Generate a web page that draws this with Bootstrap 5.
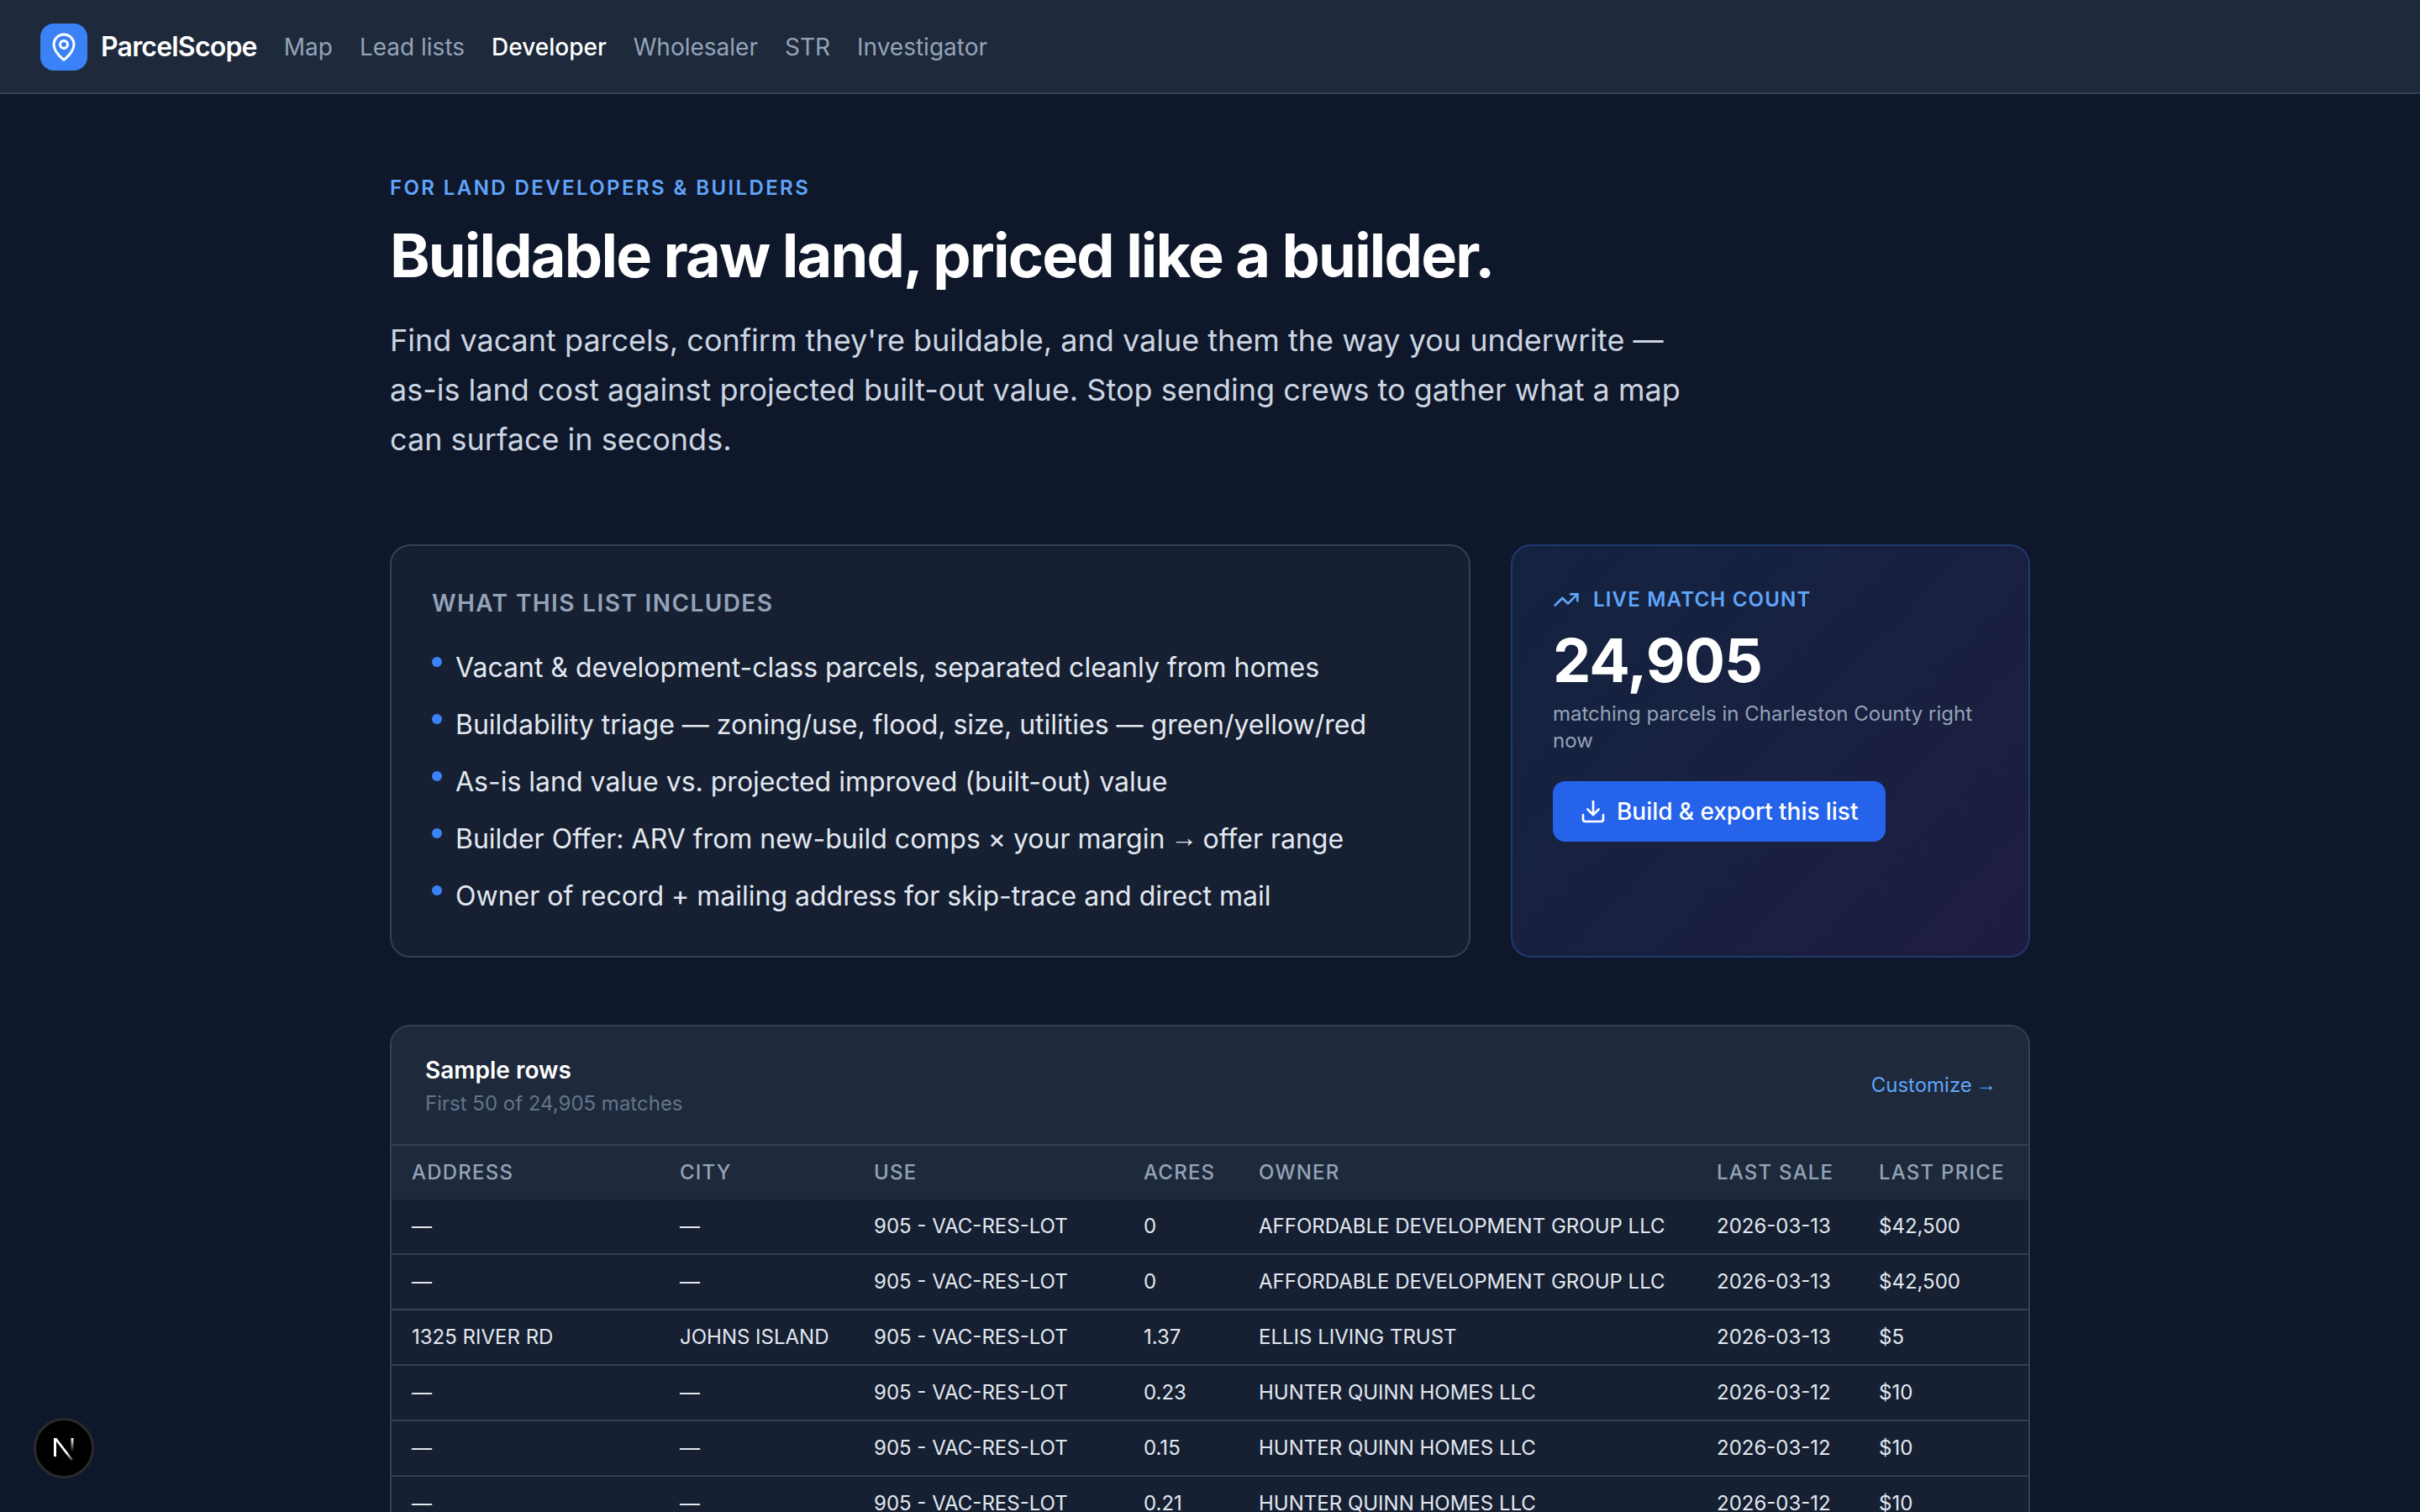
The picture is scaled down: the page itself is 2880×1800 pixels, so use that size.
<!DOCTYPE html>
<html lang="en">
<head>
    <meta charset="UTF-8">
    <meta name="viewport" content="width=device-width, initial-scale=1.0">
    <title>ParcelScope - Developer</title>
    <link href="https://cdn.jsdelivr.net/npm/bootstrap@5.3.0/dist/css/bootstrap.min.css" rel="stylesheet">
    <style>
        body {
            background-color: #0f172a;
            font-family: Inter, "Noto Sans", sans-serif;
            color: #e2e8f0;
            height: 1800px;
            overflow: hidden;
        }
        .top-bar {
            background-color: #1e293b;
            border-bottom: 2px solid #334155;
            height: 112px;
            padding: 2px 48px 0;
            gap: 32px;
        }
        .logo-box {
            width: 56px;
            height: 56px;
            border-radius: 16px;
            background-color: #3b82f6;
        }
        .logo-name {
            font-size: 32px;
            font-weight: 600;
            letter-spacing: -0.8px;
            color: #fff;
            margin-left: -16px;
        }
        .top-bar .nav { gap: 32px; }
        .top-bar .nav-link {
            padding: 0;
            font-size: 28px;
            color: #94a3b8;
        }
        .top-bar .nav-link.active {
            color: #fff;
            font-weight: 500;
        }
        .page-main {
            width: 2048px;
            margin: 0 auto;
            padding: 96px 48px 0;
        }
        .eyebrow {
            font-size: 24px;
            line-height: 32px;
            font-weight: 600;
            letter-spacing: 2.4px;
            color: #60a5fa;
        }
        .hero-title {
            font-size: 72px;
            line-height: 80px;
            font-weight: 700;
            letter-spacing: -1.8px;
            color: #fff;
            margin: 24px 0 32px;
        }
        .hero-text {
            font-size: 36px;
            line-height: 59px;
            color: #cbd5e1;
            max-width: 1568px;
            margin: 0;
        }
        .two-up {
            display: grid;
            grid-template-columns: 1fr 618px;
            gap: 48px;
            margin-top: 95px;
        }
        .info-card {
            background-color: #162032;
            border: 2px solid #334155;
            border-radius: 24px;
            padding: 48px;
            height: 492px;
        }
        .info-head {
            font-size: 28px;
            line-height: 40px;
            font-weight: 600;
            letter-spacing: 1.4px;
            color: #94a3b8;
            margin-bottom: 33px;
        }
        .inc-list { gap: 20px; }
        .inc-list li {
            font-size: 32px;
            line-height: 48px;
            color: #e2e8f0;
        }
        .inc-dot {
            width: 12px;
            height: 12px;
            margin-top: 11px;
            border-radius: 50%;
            background-color: #3b82f6;
            flex: none;
        }
        .small-arrow {
            font-family: "Liberation Sans", sans-serif;
            line-height: 0;
            margin-left: -0.07em;
            letter-spacing: -0.08em;
            vertical-align: 0.06em;
        }
        .count-card {
            background: linear-gradient(135deg, #132340, #1e1d40);
            border: 2px solid #1e3a6e;
            border-radius: 24px;
            padding: 48px;
            height: 492px;
        }
        .count-label {
            font-size: 24px;
            line-height: 32px;
            font-weight: 600;
            letter-spacing: 1.2px;
            color: #60a5fa;
        }
        .count-num {
            font-size: 72px;
            line-height: 80px;
            font-weight: 700;
            letter-spacing: -1px;
            color: #fff;
            margin-top: 16px;
        }
        .count-sub {
            font-size: 24px;
            line-height: 32px;
            color: #94a3b8;
            margin: 8px 0 32px;
        }
        .btn-export {
            --bs-btn-bg: #2563eb;
            --bs-btn-border-color: #2563eb;
            --bs-btn-hover-bg: #2563eb;
            --bs-btn-hover-border-color: #2563eb;
            height: 72px;
            padding: 0 32px 0 31px;
            gap: 12px;
            font-size: 28px;
            font-weight: 500;
            letter-spacing: -0.05px;
            border-radius: 14px;
        }
        .rows-card {
            margin-top: 80px;
            background-color: #162032;
            border: 2px solid #334155;
            border-radius: 24px;
            overflow: hidden;
        }
        .rows-head {
            background-color: #1e293b;
            border-bottom: 2px solid #334155;
            height: 142px;
            padding: 0 40px;
        }
        .rows-title {
            font-size: 28px;
            line-height: 40px;
            font-weight: 600;
            color: #fff;
        }
        .rows-sub {
            font-size: 24px;
            line-height: 32px;
            margin-top: 4px;
            color: #64748b;
        }
        .rows-link {
            font-size: 24px;
            color: #60a5fa;
            text-decoration: none;
        }
        .parcel-table {
            --bs-table-bg: transparent;
            --bs-table-color: #e2e8f0;
            --bs-table-border-color: #334155;
            table-layout: fixed;
            margin: 0;
        }
        .parcel-table th {
            background-color: #1e293b;
            color: #94a3b8;
            font-size: 24px;
            line-height: 32px;
            font-weight: 500;
            letter-spacing: 1.2px;
            padding: 16px 24px;
            border-bottom: 0;
            white-space: nowrap;
        }
        .parcel-table td {
            font-size: 24px;
            line-height: 32px;
            padding: 16px 24px;
            border-bottom-width: 2px;
            white-space: nowrap;
        }
        .c-addr { width: 319px; }
        .c-city { width: 231px; }
        .c-use { width: 321px; }
        .c-acres { width: 137px; }
        .c-owner { width: 545px; }
        .c-sale { width: 193px; }
        .c-price { width: 202px; }
        .next-badge {
            position: fixed;
            left: 40px;
            bottom: 40px;
            width: 72px;
            height: 72px;
            border-radius: 50%;
            background-color: #000;
            border: 3px solid #2b2b2b;
        }
    </style>
</head>
<body>
    <nav class="navbar top-bar d-flex justify-content-start flex-nowrap">
        <span class="logo-box d-flex align-items-center justify-content-center">
            <svg width="36" height="36" viewBox="0 0 24 24" fill="none" stroke="#fff" stroke-width="2" stroke-linecap="round" stroke-linejoin="round"><path d="M20 10c0 4.993-5.539 10.193-7.399 11.799a1 1 0 0 1-1.202 0C9.539 20.193 4 14.993 4 10a8 8 0 0 1 16 0"/><circle cx="12" cy="10" r="3"/></svg>
        </span>
        <span class="logo-name">ParcelScope</span>
        <ul class="nav">
            <li class="nav-item"><a class="nav-link" href="#">Map</a></li>
            <li class="nav-item"><a class="nav-link" href="#">Lead lists</a></li>
            <li class="nav-item"><a class="nav-link active" href="#">Developer</a></li>
            <li class="nav-item"><a class="nav-link" href="#">Wholesaler</a></li>
            <li class="nav-item"><a class="nav-link" href="#">STR</a></li>
            <li class="nav-item"><a class="nav-link" href="#">Investigator</a></li>
        </ul>
    </nav>

    <main class="page-main">
        <div class="eyebrow">FOR LAND DEVELOPERS &amp; BUILDERS</div>
        <h1 class="hero-title">Buildable raw land, priced like a builder.</h1>
        <p class="hero-text">Find vacant parcels, confirm they're buildable, and value them the way you underwrite — as-is land cost against projected built-out value. Stop sending crews to gather what a map can surface in seconds.</p>

        <div class="two-up">
            <div class="info-card">
                <div class="info-head">WHAT THIS LIST INCLUDES</div>
                <ul class="inc-list list-unstyled d-flex flex-column m-0">
                    <li class="d-flex gap-3"><span class="inc-dot"></span><span>Vacant &amp; development-class parcels, separated cleanly from homes</span></li>
                    <li class="d-flex gap-3"><span class="inc-dot"></span><span>Buildability triage — zoning/use, flood, size, utilities — green/yellow/red</span></li>
                    <li class="d-flex gap-3"><span class="inc-dot"></span><span>As-is land value vs. projected improved (built-out) value</span></li>
                    <li class="d-flex gap-3"><span class="inc-dot"></span><span>Builder Offer: ARV from new-build comps × your margin <span class="small-arrow">→</span> offer range</span></li>
                    <li class="d-flex gap-3"><span class="inc-dot"></span><span>Owner of record + mailing address for skip-trace and direct mail</span></li>
                </ul>
            </div>
            <div class="count-card">
                <div class="count-label d-flex align-items-center gap-3">
                    <svg width="32" height="32" viewBox="0 0 24 24" fill="none" stroke="#60a5fa" stroke-width="2" stroke-linecap="round" stroke-linejoin="round"><polyline points="22 7 13.5 15.5 8.5 10.5 2 17"/><polyline points="16 7 22 7 22 13"/></svg>
                    LIVE MATCH COUNT
                </div>
                <div class="count-num">24,905</div>
                <p class="count-sub">matching parcels in Charleston County right now</p>
                <button type="button" class="btn btn-primary btn-export d-inline-flex align-items-center">
                    <svg width="32" height="32" viewBox="0 0 24 24" fill="none" stroke="#fff" stroke-width="2" stroke-linecap="round" stroke-linejoin="round"><path d="M21 15v4a2 2 0 0 1-2 2H5a2 2 0 0 1-2-2v-4"/><polyline points="7 10 12 15 17 10"/><line x1="12" y1="15" x2="12" y2="3"/></svg>
                    Build &amp; export this list
                </button>
            </div>
        </div>

        <div class="rows-card">
            <div class="rows-head d-flex align-items-center justify-content-between">
                <div>
                    <div class="rows-title">Sample rows</div>
                    <div class="rows-sub">First 50 of 24,905 matches</div>
                </div>
                <a class="rows-link" href="#">Customize <span class="small-arrow">→</span></a>
            </div>
            <table class="table parcel-table">
                <colgroup>
                    <col class="c-addr"><col class="c-city"><col class="c-use"><col class="c-acres"><col class="c-owner"><col class="c-sale"><col class="c-price">
                </colgroup>
                <thead>
                    <tr><th>ADDRESS</th><th>CITY</th><th>USE</th><th>ACRES</th><th>OWNER</th><th>LAST SALE</th><th>LAST PRICE</th></tr>
                </thead>
                <tbody>
                    <tr><td>—</td><td>—</td><td>905 - VAC-RES-LOT</td><td>0</td><td>AFFORDABLE DEVELOPMENT GROUP LLC</td><td>2026-03-13</td><td>$42,500</td></tr>
                    <tr><td>—</td><td>—</td><td>905 - VAC-RES-LOT</td><td>0</td><td>AFFORDABLE DEVELOPMENT GROUP LLC</td><td>2026-03-13</td><td>$42,500</td></tr>
                    <tr><td>1325 RIVER RD</td><td>JOHNS ISLAND</td><td>905 - VAC-RES-LOT</td><td>1.37</td><td>ELLIS LIVING TRUST</td><td>2026-03-13</td><td>$5</td></tr>
                    <tr><td>—</td><td>—</td><td>905 - VAC-RES-LOT</td><td>0.23</td><td>HUNTER QUINN HOMES LLC</td><td>2026-03-12</td><td>$10</td></tr>
                    <tr><td>—</td><td>—</td><td>905 - VAC-RES-LOT</td><td>0.15</td><td>HUNTER QUINN HOMES LLC</td><td>2026-03-12</td><td>$10</td></tr>
                    <tr><td>—</td><td>—</td><td>905 - VAC-RES-LOT</td><td>0.21</td><td>HUNTER QUINN HOMES LLC</td><td>2026-03-12</td><td>$10</td></tr>
                </tbody>
            </table>
        </div>
    </main>

    <div class="next-badge d-flex align-items-center justify-content-center">
        <svg width="30" height="32" viewBox="0 0 30 32" fill="none">
            <defs>
                <linearGradient id="nFade" x1="0" y1="0" x2="0" y2="1"><stop offset="0" stop-color="#fff"/><stop offset="1" stop-color="#fff" stop-opacity="0"/></linearGradient>
                <linearGradient id="nDiag" x1="0" y1="0" x2="1" y2="1"><stop offset="0.65" stop-color="#fff"/><stop offset="1" stop-color="#fff" stop-opacity="0.15"/></linearGradient>
            </defs>
            <rect x="3" y="4" width="3" height="22" fill="#fff"/>
            <path d="M3 4h3.4L26 29.5l-2.2 1.5L3 4z" fill="url(#nDiag)"/>
            <rect x="23.5" y="4" width="3" height="16" fill="url(#nFade)"/>
        </svg>
    </div>

    <script src="https://cdn.jsdelivr.net/npm/bootstrap@5.3.0/dist/js/bootstrap.bundle.min.js"></script>
</body>
</html>
